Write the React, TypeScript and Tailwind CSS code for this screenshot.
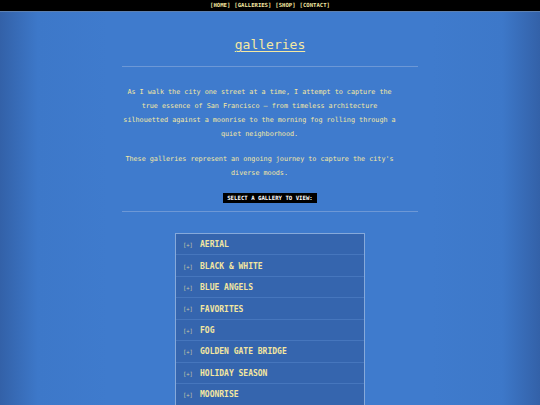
import React from 'react';

const navLinks = ['HOME', 'GALLERIES', 'SHOP', 'CONTACT'];

const galleries = [
  'AERIAL',
  'BLACK & WHITE',
  'BLUE ANGELS',
  'FAVORITES',
  'FOG',
  'GOLDEN GATE BRIDGE',
  'HOLIDAY SEASON',
  'MOONRISE',
  'NIGHT',
  'SUNSET',
];

const mono = { fontFamily: '"DejaVu Sans Mono", "Liberation Mono", monospace' };

const GalleryRow: React.FC<{ name: string }> = ({ name }) => (
  <div className="flex h-[21.45px] items-center border-b border-[#4676bd] pl-[7px] pt-[2px] box-border">
    <span className="w-[17px] text-[5.5px] text-[#c9c7a8]">[+]</span>
    <span className="text-[8px] font-bold text-[#f3e6a0]">{name}</span>
  </div>
);

export default function App() {
  return (
    <div
      className="min-h-screen bg-[linear-gradient(to_right,#3361a8,#3d78c9_7%,#3f7bcd_20%,#3f7bcd_80%,#3d78c9_93%,#3361a8)] text-[#f5e9a2]"
      style={mono}
    >
      <header className="flex h-[12px] items-center justify-center gap-[4px] border-b border-[#5d80b0] bg-black text-[5.6px] font-bold text-[#f3e6a0]">
        {navLinks.map((link) => (
          <span key={link}>[{link}]</span>
        ))}
      </header>

      <main className="mx-auto w-[296px] pt-[25px]">
        <h1 className="text-center text-[13px] leading-[16px] underline decoration-1 underline-offset-2">
          galleries
        </h1>
        <hr className="mt-[13px] border-t border-[#6d98d6]" />

        <p className="mt-[18px] pr-[21px] text-center text-[6.75px] leading-[14px]">
          As I walk the city one street at a time, I attempt to capture the
          <br />
          true essence of San Francisco – from timeless architecture
          <br />
          silhouetted against a moonrise to the morning fog rolling through a
          <br />
          quiet neighborhood.
        </p>
        <p className="mt-[11px] pr-[21px] text-center text-[6.75px] leading-[14px]">
          These galleries represent an ongoing journey to capture the city's
          <br />
          diverse moods.
        </p>

        <div className="mt-[13px] flex justify-center">
          <span className="bg-black px-[4px] text-[5.7px] font-bold leading-[10px] text-white">
            SELECT A GALLERY TO VIEW:
          </span>
        </div>
        <hr className="mt-[8px] border-t border-[#6d98d6]" />

        <div className="mx-auto mt-[21px] w-[190px] border border-[#86a9da] bg-[#3565ae]">
          {galleries.map((g) => (
            <GalleryRow key={g} name={g} />
          ))}
        </div>
      </main>
    </div>
  );
}
